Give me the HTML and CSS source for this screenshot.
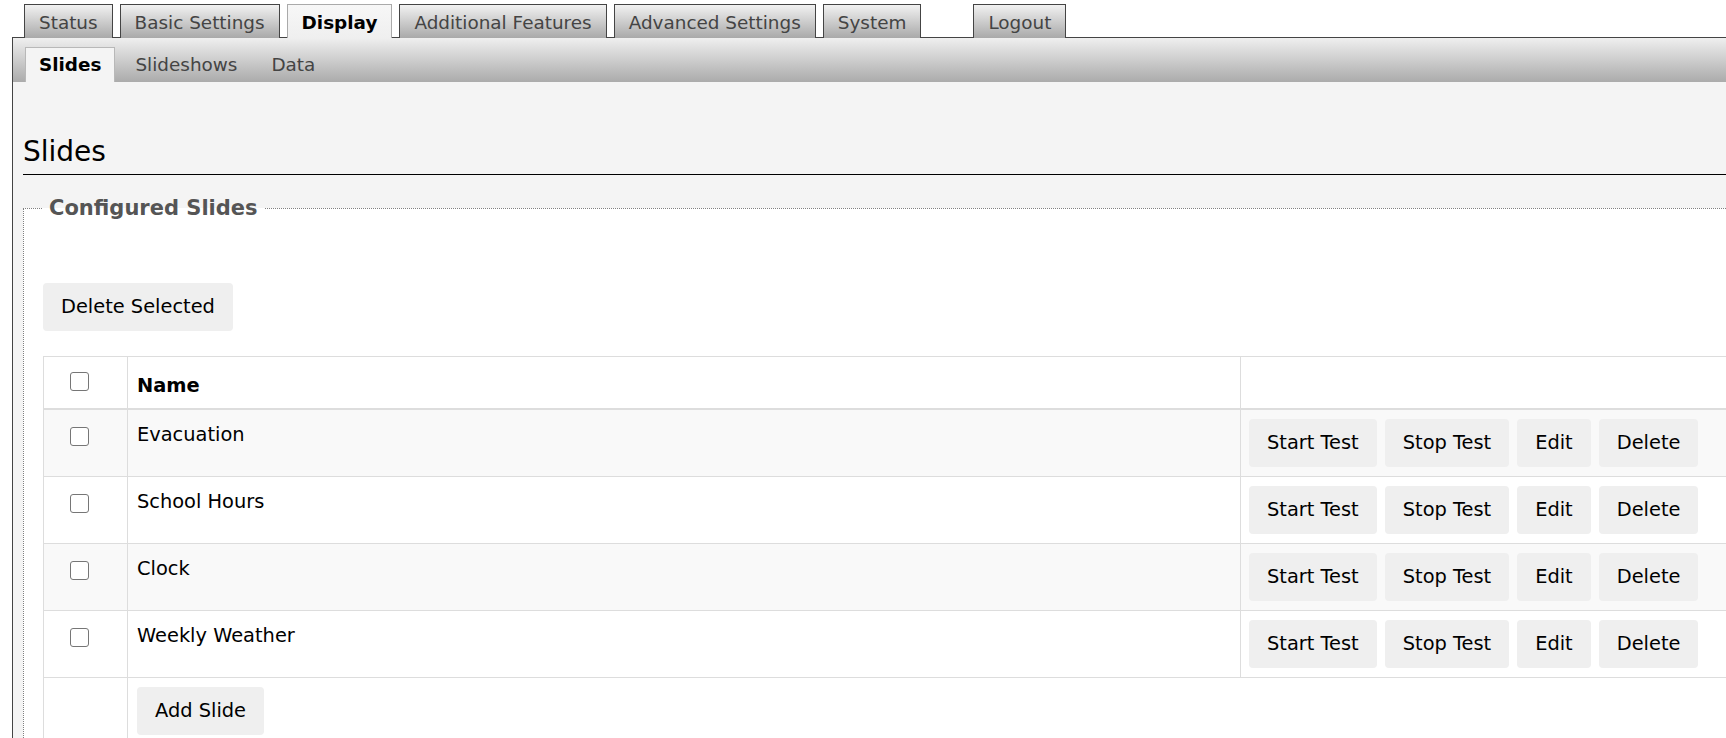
FILE: index.html
```html
<!DOCTYPE html>
<html lang="en">
<head>
<meta charset="utf-8">
<title>Display - Slides</title>
<link rel="stylesheet" href="styles.css">
</head>
<body>
<div class="app">
  <ul class="main-tabs">
    <li class="main-tab">Status</li>
    <li class="main-tab">Basic Settings</li>
    <li class="main-tab is-active">Display</li>
    <li class="main-tab">Additional Features</li>
    <li class="main-tab">Advanced Settings</li>
    <li class="main-tab">System</li>
    <li class="main-tab logout">Logout</li>
  </ul>
  <div class="panel">
    <div class="sub-bar">
      <ul class="sub-tabs">
        <li class="sub-tab is-active">Slides</li>
        <li class="sub-tab">Slideshows</li>
        <li class="sub-tab">Data</li>
      </ul>
    </div>
    <div class="content">
      <h2 class="page-title">Slides</h2>
      <fieldset class="group">
        <legend class="group-title">Configured Slides</legend>
        <div class="toolbar">
          <button class="btn" type="button">Delete Selected</button>
        </div>
        <table class="slides">
          <colgroup>
            <col class="col-check">
            <col class="col-name">
            <col class="col-actions">
          </colgroup>
          <thead>
            <tr>
              <th class="cell-check"><input type="checkbox" class="box head-box"></th>
              <th class="cell-name">Name</th>
              <th class="cell-actions"></th>
            </tr>
          </thead>
          <tbody>
            <tr class="odd">
              <td class="cell-check"><input type="checkbox" class="box"></td>
              <td class="cell-name">Evacuation</td>
              <td class="cell-actions"><div class="actions"><button class="btn" type="button">Start Test</button><button class="btn" type="button">Stop Test</button><button class="btn" type="button">Edit</button><button class="btn" type="button">Delete</button></div></td>
            </tr>
            <tr>
              <td class="cell-check"><input type="checkbox" class="box"></td>
              <td class="cell-name">School Hours</td>
              <td class="cell-actions"><div class="actions"><button class="btn" type="button">Start Test</button><button class="btn" type="button">Stop Test</button><button class="btn" type="button">Edit</button><button class="btn" type="button">Delete</button></div></td>
            </tr>
            <tr class="odd">
              <td class="cell-check"><input type="checkbox" class="box"></td>
              <td class="cell-name">Clock</td>
              <td class="cell-actions"><div class="actions"><button class="btn" type="button">Start Test</button><button class="btn" type="button">Stop Test</button><button class="btn" type="button">Edit</button><button class="btn" type="button">Delete</button></div></td>
            </tr>
            <tr>
              <td class="cell-check"><input type="checkbox" class="box"></td>
              <td class="cell-name">Weekly Weather</td>
              <td class="cell-actions"><div class="actions"><button class="btn" type="button">Start Test</button><button class="btn" type="button">Stop Test</button><button class="btn" type="button">Edit</button><button class="btn" type="button">Delete</button></div></td>
            </tr>
            <tr>
              <td class="cell-check"></td>
              <td class="cell-name" colspan="2"><button class="btn" type="button">Add Slide</button></td>
            </tr>
          </tbody>
        </table>
      </fieldset>
    </div>
  </div>
</div>
</body>
</html>
```

FILE: styles.css
```css
html {
  overflow: hidden;
}

body {
  margin: 0;
  background: #fff;
  color: #000;
  font-family: "DejaVu Sans", Verdana, sans-serif;
}

.app {
  width: 1800px;
  padding: 4px 0 0 12px;
}

/* Top level tabs */
.main-tabs {
  display: flex;
  gap: 7px;
  list-style: none;
  margin: 0 0 -1px;
  padding: 0 0 0 12px;
}

.main-tab {
  position: relative;
  z-index: 1;
  box-sizing: border-box;
  height: 34px;
  padding: 2px 14px 0;
  line-height: 31px;
  font-size: 18.4px;
  color: #444;
  border: 1px solid #444;
  border-bottom: 0;
  background: linear-gradient(#f1f1f1, #a9a9a9);
}

.main-tab.is-active {
  font-weight: bold;
  color: #000;
  border-color: #aaa;
  background: linear-gradient(#f7f7f7, #efefef);
}

.main-tab.logout {
  margin-left: 45px;
}

/* Panel */
.panel {
  border-top: 1px solid #444;
  border-left: 1px solid #444;
  background: #f4f4f4;
  min-height: 760px;
}

.sub-bar {
  height: 44px;
  box-sizing: border-box;
  padding: 9px 0 0 12px;
  background: linear-gradient(#efefef, #ababab);
}

.sub-tabs {
  display: flex;
  gap: 6px;
  list-style: none;
  margin: 0;
  padding: 0;
}

.sub-tab {
  height: 35px;
  box-sizing: border-box;
  padding: 0 13px;
  line-height: 34px;
  font-size: 18.4px;
  color: #444;
  border: 1px solid transparent;
  border-bottom: 0;
}

.sub-tab.is-active {
  font-weight: bold;
  color: #000;
  border-color: #b8b8b8;
  background: #f4f4f4;
}

.content {
  padding: 0 0 0 10px;
}

.page-title {
  margin: 54px 0 0;
  padding: 0 0 7px;
  font-size: 28px;
  font-weight: normal;
  line-height: 31px;
  border-bottom: 1px solid #000;
}

/* Slide list group */
.group {
  margin: 21px 0 0;
  padding: 0 19px 40px;
  border: 1px dotted #808080;
  background: #fff;
  min-width: 0;
}

.group-title {
  padding: 0 6px;
  font-size: 21px;
  font-weight: bold;
  color: #555;
}

.toolbar {
  margin-top: 63px;
}

.btn {
  display: inline-block;
  margin: 0;
  padding: 10px 18px;
  border: 0;
  border-radius: 4px;
  background: #efefef;
  color: #000;
  font-family: "DejaVu Sans", Verdana, sans-serif;
  font-size: 19.4px;
  line-height: 28px;
}

/* Table */
.slides {
  margin-top: 25px;
  width: 1718px;
  table-layout: fixed;
  border-collapse: collapse;
  border: 1px solid #ddd;
  font-size: 19.4px;
  line-height: 32px;
}

.col-check {
  width: 84px;
}

.col-name {
  width: 1113px;
}

.slides th,
.slides td {
  border: 1px solid #ddd;
  vertical-align: top;
  text-align: left;
  padding: 9px;
}

.slides thead th {
  height: 32px;
  padding: 13px 9px 6px;
  border-bottom: 2px solid #ddd;
}

.slides .cell-check {
  padding-left: 26px;
  padding-right: 0;
}

.slides tbody tr {
  background: #fff;
}

.slides tbody tr.odd {
  background: #f9f9f9;
}

.box {
  appearance: none;
  display: block;
  width: 19px;
  height: 19px;
  margin: 8px 0 0;
  border: 1.5px solid #767676;
  border-radius: 3px;
  background: #fff;
  box-sizing: border-box;
}

.box.head-box {
  margin-top: 2px;
}

.actions {
  display: flex;
  gap: 8px;
}

.slides .cell-actions {
  padding-left: 8px;
}
```
